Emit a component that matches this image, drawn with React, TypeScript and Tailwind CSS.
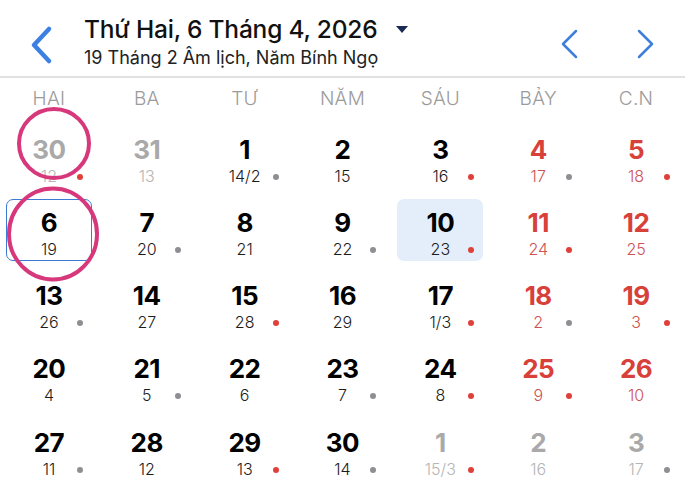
import React from 'react';

type Day = {
  d: number;
  l: string;
  muted?: boolean;
  dot?: 'red' | 'gray';
};

const weekdays = ['HAI', 'BA', 'TƯ', 'NĂM', 'SÁU', 'BẢY', 'C.N'];

const weeks: Day[][] = [
  [
    { d: 30, l: '12', muted: true, dot: 'red' },
    { d: 31, l: '13', muted: true },
    { d: 1, l: '14/2', dot: 'gray' },
    { d: 2, l: '15' },
    { d: 3, l: '16', dot: 'red' },
    { d: 4, l: '17', dot: 'gray' },
    { d: 5, l: '18', dot: 'red' },
  ],
  [
    { d: 6, l: '19' },
    { d: 7, l: '20', dot: 'gray' },
    { d: 8, l: '21' },
    { d: 9, l: '22', dot: 'gray' },
    { d: 10, l: '23', dot: 'red' },
    { d: 11, l: '24', dot: 'red' },
    { d: 12, l: '25' },
  ],
  [
    { d: 13, l: '26', dot: 'gray' },
    { d: 14, l: '27' },
    { d: 15, l: '28', dot: 'red' },
    { d: 16, l: '29' },
    { d: 17, l: '1/3', dot: 'red' },
    { d: 18, l: '2', dot: 'gray' },
    { d: 19, l: '3', dot: 'red' },
  ],
  [
    { d: 20, l: '4' },
    { d: 21, l: '5', dot: 'gray' },
    { d: 22, l: '6' },
    { d: 23, l: '7', dot: 'gray' },
    { d: 24, l: '8', dot: 'red' },
    { d: 25, l: '9', dot: 'red' },
    { d: 26, l: '10' },
  ],
  [
    { d: 27, l: '11', dot: 'gray' },
    { d: 28, l: '12' },
    { d: 29, l: '13', dot: 'red' },
    { d: 30, l: '14', dot: 'gray' },
    { d: 1, l: '15/3', muted: true, dot: 'red' },
    { d: 2, l: '16', muted: true },
    { d: 3, l: '17', muted: true, dot: 'gray' },
  ],
];

function DayCell({ day, col, selected, today }: { day: Day; col: number; selected: boolean; today: boolean }) {
  const weekend = col >= 5;
  let numColor = 'text-black';
  let lunarColor = 'text-[#1c1c1c]';
  if (day.muted) {
    numColor = 'text-[#a9a9a9]';
    lunarColor = 'text-[#b5b5b5]';
  } else if (weekend) {
    numColor = 'text-[#d8403a]';
    lunarColor = 'text-[#cd5252]';
  }

  let box = 'border-[1.5px] border-transparent';
  if (selected) box = 'border-[1.5px] border-[#3c7ad3]';
  if (today) box = 'border-[1.5px] border-transparent bg-[#e3eefa]';

  return (
    <div className="flex items-center justify-center">
      <div className={`w-[86px] h-[62px] rounded-[7px] flex flex-col items-center pt-[8px] ${box}`}>
        <div className={`text-[26px] leading-[30px] font-bold tracking-[-0.5px] ${numColor}`}>{day.d}</div>
        <div className={`relative w-full text-center text-[16px] leading-[19px] font-light mt-[2px] ${lunarColor}`}>
          {day.l}
          {day.dot && (
            <span
              className={`absolute left-[calc(50%+28px)] top-[7px] w-[6px] h-[6px] rounded-full ${
                day.dot === 'red' ? 'bg-[#e0403a]' : 'bg-[#8e8e93]'
              }`}
            />
          )}
        </div>
      </div>
    </div>
  );
}

export default function App() {
  return (
    <div className="relative w-[685px] h-[500px] bg-white overflow-hidden font-['Inter',sans-serif]">
      {/* header */}
      <div className="h-[78px] flex items-start border-b-2 border-[#e1e1e1]">
        <button className="ml-[29px] mt-[25px] w-[26px] h-[40px] flex items-center justify-center">
          <svg width="26" height="40" viewBox="0 0 26 40">
            <path d="M20 4 L5 20 L20 36" fill="none" stroke="#3d80e3" strokeWidth="4.5" strokeLinecap="round" strokeLinejoin="round" />
          </svg>
        </button>
        <div className="ml-[29px] mt-[14px] flex flex-col">
          <div className="flex items-center">
            <span className="text-[24.5px] leading-[30px] font-medium text-[#111] tracking-[-0.2px]">
              Thứ Hai, 6 Tháng 4, 2026
            </span>
            <svg className="ml-[19px]" width="12" height="7" viewBox="0 0 12 7">
              <path d="M0 0 L12 0 L6 7 Z" fill="#1b2a52" />
            </svg>
          </div>
          <span className="text-[18px] leading-[22px] text-[#222] mt-[3px]">19 Tháng 2 Âm lịch, Năm Bính Ngọ</span>
        </div>
        <div className="ml-auto mr-[31px] mt-[29px] flex items-center gap-[57px]">
          <svg width="18" height="30" viewBox="0 0 18 30">
            <path d="M15 2 L2 15 L15 28" fill="none" stroke="#3f7fdc" strokeWidth="2.5" strokeLinecap="round" strokeLinejoin="round" />
          </svg>
          <svg width="18" height="30" viewBox="0 0 18 30">
            <path d="M3 2 L16 15 L3 28" fill="none" stroke="#3f7fdc" strokeWidth="2.5" strokeLinecap="round" strokeLinejoin="round" />
          </svg>
        </div>
      </div>

      {/* weekday labels */}
      <div className="grid grid-cols-7 h-[42px] items-center text-center">
        {weekdays.map((w) => (
          <div key={w} className="text-[19px] font-light text-[#9b9b9b] tracking-[0.3px]">
            {w}
          </div>
        ))}
      </div>

      {/* days */}
      <div className="grid grid-cols-7 auto-rows-[73.25px]">
        {weeks.map((week, r) =>
          week.map((day, c) => (
            <DayCell key={`${r}-${c}`} day={day} col={c} selected={r === 1 && c === 0} today={r === 1 && c === 4} />
          ))
        )}
      </div>

      {/* hand-drawn annotation circles */}
      <svg className="absolute inset-0 pointer-events-none" width="685" height="500">
        <ellipse cx="54" cy="143.5" rx="35" ry="34.5" fill="none" stroke="#d6387b" strokeWidth="4" />
        <ellipse cx="53" cy="234" rx="44" ry="45.5" fill="none" stroke="#d6387b" strokeWidth="4" />
      </svg>
    </div>
  );
}
